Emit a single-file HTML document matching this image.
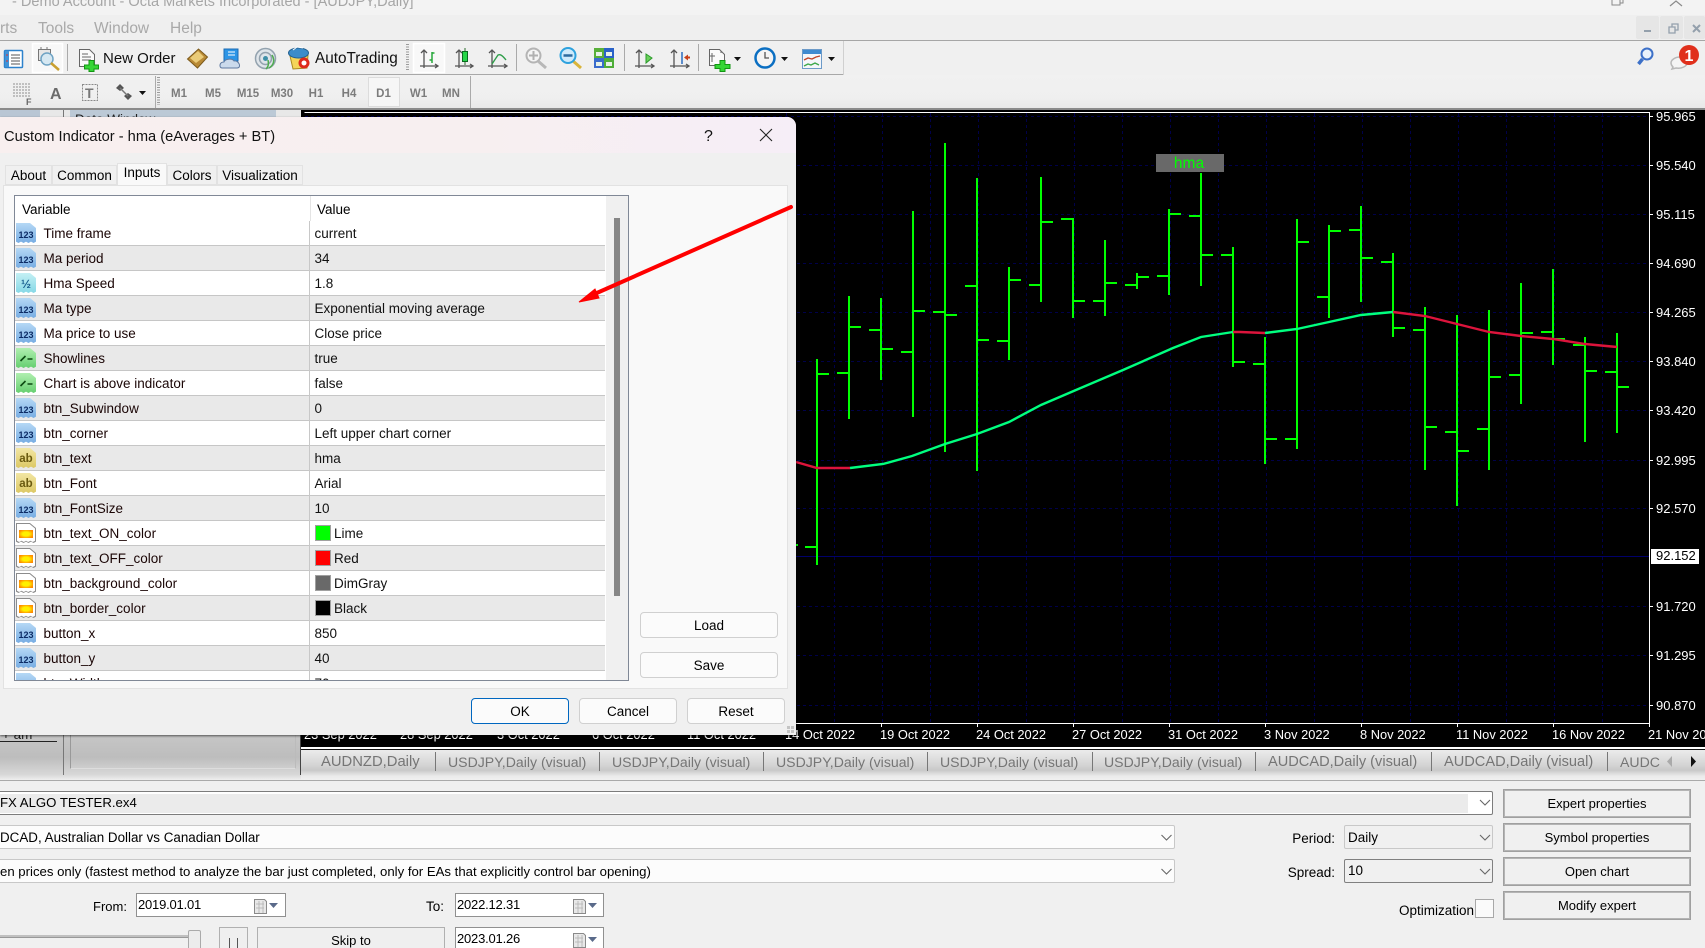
<!DOCTYPE html>
<html lang="en"><head><meta charset="utf-8"><title>Custom Indicator</title>
<style>
html,body{margin:0;padding:0;overflow:hidden;width:1705px;height:948px}
body{position:relative;background:#f0f0f0;font-family:"Liberation Sans",sans-serif;color:#000}
#root{position:absolute;left:0;top:0;width:1705px;height:948px;overflow:hidden}
.a{position:absolute}
.t{position:absolute;white-space:nowrap}
svg{position:absolute;left:0;top:0;overflow:visible}
.menu{font-size:15.5px;color:#a9a9a9;top:20px;line-height:18px}
.px{font-size:13px;color:#fff;left:1656px;line-height:16px}
.dt{font-size:12.85px;color:#fff;top:727px;line-height:16px}
.tab{position:absolute;top:165px;height:20px;line-height:21px;font-size:13.5px;text-align:center;background:#f0f0f0;box-shadow:inset 0 0 0 1px #e2e2e2;box-sizing:border-box}
.r{position:absolute;left:16px;width:590px;height:25px;box-sizing:border-box;border-bottom:1px solid #c6c6c6;background:#fff;font-size:13.5px;line-height:24px}
.r.g{background:#e9e9e9}
.r b{font-weight:normal;position:absolute;left:28.5px;top:1px;white-space:nowrap;color:#1a0505}
.r u{text-decoration:none;position:absolute;left:299.5px;top:1px;white-space:nowrap;color:#111}
.r s{text-decoration:none;position:absolute;left:294px;top:0;width:1px;height:25px;background:#c8c8c8}
.r em{position:absolute;left:299.5px;top:4px;width:16px;height:16px;box-sizing:border-box;border:1px solid #a0a0a0}
.r em+u{left:319px}
.ic{--t:polygon(0 0,70% 0,100% 25%,100% 93%,88% 100%,75% 93%,62% 100%,50% 93%,38% 100%,25% 93%,12% 100%,0 93%);position:absolute;left:1px;top:2px;width:20px;height:20px;clip-path:var(--t);font:bold 9px/24px "Liberation Sans",sans-serif;text-align:center;font-style:normal;box-sizing:border-box}
.n{background:linear-gradient(#b5d8f5,#77ade3);color:#0c2c66}
.h{background:linear-gradient(#c4f0f4,#86d8e6);color:#1a6090;font-size:12px;line-height:22px}
.y{background:linear-gradient(#f2e6a4,#dcc864);color:#6a5a10;font-size:11.5px;line-height:22px}
.b{background:linear-gradient(#b0efb0,#66cf70)}
.c{background:#8c8c8c}
.c::before{content:"";position:absolute;inset:1px;background:#fff;clip-path:var(--t)}
.c::after{content:"";position:absolute;left:3px;top:7px;width:14px;height:8px;background:radial-gradient(ellipse at center,#fff000 35%,#ff8a00 80%)}
.btn{position:absolute;box-sizing:border-box;text-align:center;font-size:13.5px;border-radius:4px;border:1px solid #d0d0d0;background:#fbfbfb;height:26px;line-height:26px}
.ts{position:absolute;top:750px;font-size:14.1px;color:#757575;line-height:24px;white-space:nowrap}
.sp{position:absolute;top:752px;width:1px;height:19px;background:#777}
.cb{position:absolute;box-sizing:border-box;font-size:13px;line-height:21px;white-space:nowrap;overflow:hidden}
.rb{position:absolute;left:1503px;width:188px;height:29px;box-sizing:border-box;border:1px solid #a0a0a0;box-shadow:inset 0 0 0 1px #b4b4b4;background:#f0f0f0;text-align:center;font-size:13px;line-height:28px}
.lb{position:absolute;font-size:13px;line-height:16px;white-space:nowrap}
</style></head><body><div id="root">

<!-- window chrome -->
<div class="a" style="left:0;top:0;width:1705px;height:15px;background:#f3f3f3"></div>
<div class="a" style="left:0;top:15px;width:1705px;height:25px;background:#efefef"></div>
<div class="t" style="left:12px;top:-7px;font-size:14.55px;line-height:18px;color:#a6a6a6">- Demo Account - Octa Markets Incorporated - [AUDJPY,Daily]</div>
<div class="t menu" style="left:0">rts</div><div class="t menu" style="left:38px">Tools</div><div class="t menu" style="left:94px">Window</div><div class="t menu" style="left:170px">Help</div>
<div class="a" style="left:0;top:40px;width:1705px;height:1px;background:#a6a6a6"></div>
<div class="a" style="left:0;top:41px;width:1705px;height:33px;background:#f0f0f0"></div>
<div class="a" style="left:0;top:74px;width:844px;height:1px;background:#a8a8a8"></div>
<div class="a" style="left:843px;top:41px;width:1px;height:34px;background:#d0d0d0"></div>
<div class="a" style="left:0;top:75px;width:1705px;height:33px;background:linear-gradient(#f1f1f1,#efefef 70%,#e8e8e8)"></div>
<div class="a" style="left:0;top:108px;width:1705px;height:2px;background:#8a8a8a"></div>
<div class="a" style="left:1636px;top:16px;width:23px;height:23px;background:#e6e6e6;border-radius:2px"></div>
<div class="a" style="left:1660px;top:16px;width:23px;height:23px;background:#e6e6e6;border-radius:2px"></div>
<div class="a" style="left:1684px;top:16px;width:21px;height:23px;background:#e6e6e6;border-radius:2px"></div>

<svg width="1705" height="110" viewBox="0 0 1705 110" fill="none">
 <!-- top right controls -->
 <path d="M1612 0v5h8v-5M1620 3h3v-3" stroke="#8a8a8a"/>
 <path d="M1670 6l6-5 6 5" stroke="#8a8a8a" stroke-width="1.2"/>
 <path d="M1644 31h7" stroke="#94a0ac" stroke-width="2"/>
 <path d="M1669 27h6v6h-6zM1672 27v-3h6v6h-3" stroke="#94a0ac" stroke-width="1.3"/>
 <path d="M1693 25l7 7M1700 25l-7 7" stroke="#94a0ac" stroke-width="2"/>
 <!-- market watch -->
 <rect x="4.500" y="50.500" width="18" height="17" rx="1" fill="#fff" stroke="#2d82cc" stroke-width="1.5"/>
 <rect x="5" y="51" width="4" height="16" fill="#3f93d8"/>
 <path d="M11 55h9M11 58h9M11 61h9M11 64h9" stroke="#555"/>
 <path d="M6 55h2M6 61h2" stroke="#d33"/>
 <!-- navigator pressed -->
 <rect x="32.500" y="43.500" width="30" height="29" fill="#f8f8f8" stroke="#fff" stroke-width="1.500"/>
 <rect x="38.500" y="49.500" width="12" height="11" fill="#e6e6e6" stroke="#777"/>
 <path d="M41 49v-2M47 49v-2" stroke="#777"/>
 <circle cx="47" cy="59" r="6" fill="#d6e8f2" stroke="#6fa3c4" stroke-width="1.5"/>
 <path d="M51 63l8 7" stroke="#c9a030" stroke-width="2.500"/>
 <path d="M67.500 44v27M516.500 44v27M624.500 44v27M698.500 44v27M155.500 76v32M470.500 76v32" stroke="#aaa"/>
 <!-- new order -->
 <path d="M79.500 49.500h10l5 5v12h-15z" fill="#fafafa" stroke="#666"/>
 <path d="M82 54h6M82 57h9M82 60h9" stroke="#666"/>
 <path d="M89 60.500h5v4.500h4.500v4h-4.500v2.500h-5v-2.500h-4.500v-4h4.500z" fill="#35d635" stroke="#129612"/>
 <!-- diamond -->
 <path d="M187.500 59l11-10 9 8-10 11z" fill="#b98a35" stroke="#7c5a1c"/>
 <path d="M190 58l8-7 6 6-8 6z" fill="#eacb78"/>
 <!-- cloud doc -->
 <rect x="224" y="49" width="14" height="12" fill="#2c95e6" stroke="#1c6cb4"/>
 <path d="M228 52h7M228 55h7" stroke="#fff"/>
 <path d="M222 68c-3 0-3-6 2-6 1-3 8-4 10-1 5-1 8 7 3 7z" fill="#cbdaec" stroke="#5f79a0"/>
 <!-- signal -->
 <circle cx="265.500" cy="58.500" r="10" fill="#dfe5ea" stroke="#93a2ae" stroke-width="1.500"/>
 <circle cx="265.500" cy="58.500" r="6" stroke="#93a2ae" stroke-width="1.500"/>
 <circle cx="265.500" cy="58.500" r="2.500" fill="#3f8fa8"/>
 <path d="M268 60c1 5 0 7-2 9M272 55c3 5 2 10-3 13" stroke="#4eab4e" stroke-width="1.500"/>
 <!-- autotrading -->
 <path d="M290 56l18-1-1 13-14 1z" fill="#f4d558" stroke="#a98a20"/>
 <ellipse cx="298.500" cy="53" rx="10" ry="5" fill="#3b8cc9" stroke="#23608f"/>
 <path d="M293 50l4-3 6 1" stroke="#fff"/>
 <circle cx="304" cy="63" r="5.500" fill="#de2a1a"/><circle cx="304" cy="63" r="2.500" fill="#fff"/>
 <!-- grip -->
 <path d="M407.500 44v27M158.500 77v28" stroke="#9a9a9a" stroke-width="3" stroke-dasharray="1 1.500"/>
 <!-- pressed bar chart -->
 <rect x="413.500" y="43.500" width="31" height="29" fill="#f8f8f8" stroke="#fff" stroke-width="1.500"/>
 <path d="M424 50v18M420 66h18M421 53l3-3 3 3M435 64l3 2-3 2" stroke="#555" stroke-width="1.300"/>
 <path d="M432 52v11M432 53h2.500M429.500 60h2.500" stroke="#27a83a" stroke-width="1.500"/>
 <!-- candle -->
 <path d="M459 50v18M455 66h18M456 53l3-3 3 3M470 64l3 2-3 2" stroke="#555" stroke-width="1.300"/>
 <path d="M465 48v17" stroke="#2b6b2b"/><rect x="462.500" y="51.500" width="5" height="10" fill="#25d648" stroke="#0a6a20"/>
 <!-- line -->
 <path d="M492 50v18M488 66h19M489 53l3-3 3 3M504 64l3 2-3 2" stroke="#555" stroke-width="1.300"/>
 <path d="M492 64l6-9c2-1 4 0 8 5" stroke="#2f9e4a" stroke-width="1.400"/>
 <!-- zoom in -->
 <path d="M538 61l8 7" stroke="#b8b8b8" stroke-width="3"/>
 <circle cx="533.500" cy="55.500" r="7" fill="#f4f4f4" stroke="#b4b4b4" stroke-width="2"/>
 <path d="M529 55.500h9M533.500 51v9" stroke="#b0b0b0" stroke-width="2"/>
 <!-- zoom out -->
 <path d="M573 61l8 7" stroke="#d9b43a" stroke-width="3"/>
 <circle cx="568" cy="55.500" r="7.500" fill="#cfeafb" stroke="#2ea2de" stroke-width="2"/>
 <path d="M563.500 55.500h9" stroke="#2c6a9e" stroke-width="2.500"/>
 <!-- tile -->
 <rect x="594" y="48" width="10" height="10" fill="#59b03a"/><rect x="604" y="48" width="10" height="10" fill="#2a62c8"/>
 <rect x="594" y="58" width="10" height="10" fill="#3a6ccc"/><rect x="604" y="58" width="10" height="10" fill="#4fae38"/>
 <path d="M596 52h6v4h-6zM606 52h6v4h-6zM596 62h6v4h-6zM606 62h6v4h-6z" fill="#e8f2e8"/>
 <!-- shift -->
 <path d="M639 50v18M635 66h19M636 53l3-3 3 3M651 64l3 2-3 2" stroke="#555" stroke-width="1.300"/>
 <path d="M646 54l6 4-6 5z" fill="#6ad05a" stroke="#2a9a2a"/>
 <!-- autoscroll -->
 <path d="M674 50v18M670 66h19M671 53l3-3 3 3M686 64l3 2-3 2" stroke="#555" stroke-width="1.300"/>
 <path d="M682 52v12" stroke="#2a6cc0" stroke-width="1.500"/>
 <path d="M684 57.500l4-3v2h2v2h-2v2z" fill="#c8401a"/>
 <!-- new chart -->
 <path d="M709.500 49.500h10l5 5v11h-15z" fill="#fafafa" stroke="#666"/>
 <path d="M712 53v9M715 56h-5M721 53v-2" stroke="#666"/>
 <path d="M720 60.500h5v4h5v4h-5v3h-5v-3h-5v-4h5z" fill="#35d635" stroke="#129612"/>
 <path d="M734 57h7l-3.500 4z M781 57h7l-3.500 4z M828 57h7l-3.500 4z" fill="#111"/>
 <!-- clock -->
 <circle cx="765" cy="58" r="9.500" fill="#f4f4f4" stroke="#0b6fc2" stroke-width="2.500"/>
 <path d="M765 52v6h4" stroke="#555" stroke-width="1.300"/>
 <!-- template -->
 <rect x="802.500" y="49.500" width="19" height="19" fill="#f4f6fa" stroke="#6c9ac8"/>
 <rect x="803" y="50" width="18" height="4" fill="#3f8ad0"/>
 <path d="M804 60l4-2 4 1 4-2 4-1" stroke="#c0452a" stroke-width="1.300"/>
 <path d="M804 66l4-2 3 1 4-2 4 2" stroke="#3da84a" stroke-width="1.300"/>
 <!-- search + chat -->
 <circle cx="1647" cy="54" r="5.500" fill="#eaf2fb" stroke="#3c70c8" stroke-width="2"/>
 <path d="M1642.500 59l-4 5" stroke="#3c70c8" stroke-width="3.500"/>
 <path d="M1680 57c-5 0-9 3-9 6 0 2 1 3 2 4l-1 2 4-1c6 1 11-2 11-5 0-4-3-6-7-6z" fill="#f4f4f4" stroke="#b8b8b8" stroke-width="1.500"/>
 <circle cx="1689" cy="55" r="10" fill="#e0301c"/>
 <text x="1689" y="61" font-family="Liberation Sans" font-size="16" font-weight="bold" text-anchor="middle" fill="#fff">1</text>
 <!-- row 2 icons -->
 <path d="M13 84h17M13 87h17M13 90h17M13 93h17M13 96h17" stroke="#8f8f8f" stroke-dasharray="2 1"/>
 <text x="26" y="105" font-family="Liberation Sans" font-size="9" font-weight="bold" fill="#666">F</text>
 <text x="50" y="99" font-family="Liberation Sans" font-size="16" font-weight="bold" fill="#6b6b6b">A</text>
 <rect x="82.500" y="84.500" width="15" height="16" stroke="#8a8a8a" stroke-dasharray="2 1"/>
 <text x="85" y="98" font-family="Liberation Sans" font-size="14" font-weight="bold" fill="#777">T</text>
 <path d="M116 88l4-4 4 4-4 3zM124 96l4-3 4 3-4 4z" fill="#555"/><path d="M120 88l8 8" stroke="#777" stroke-width="1.500"/>
 <path d="M139 91h7l-3.500 4z" fill="#111"/>
 <rect x="368.500" y="77.500" width="31" height="29" fill="#f6f6f6" stroke="#dcdcdc"/>
 <g font-family="Liberation Sans" font-size="11.500" font-weight="bold" fill="#7c7c7c" text-anchor="middle">
  <text x="179" y="97">M1</text><text x="213" y="97">M5</text><text x="248" y="97">M15</text><text x="282" y="97">M30</text><text x="316" y="97">H1</text><text x="349" y="97">H4</text><text x="383.500" y="97">D1</text><text x="418.500" y="97">W1</text><text x="451" y="97">MN</text>
 </g>
</svg>
<div class="t" style="left:103px;top:50px;font-size:15px;line-height:18px;color:#111">New Order</div>
<div class="t" style="left:315px;top:50px;font-size:15.3px;line-height:18px;color:#111">AutoTrading</div>

<!-- left panes peek -->
<div class="a" style="left:0;top:110px;width:301px;height:10px;background:#e8e8e8"></div>
<div class="a" style="left:0;top:110px;width:40px;height:10px;background:#b9c6d4"></div>
<div class="a" style="left:70px;top:110px;width:206px;height:10px;background:#bcc9d6"></div>
<div class="a" style="left:63px;top:110px;width:1px;height:10px;background:#777"></div>
<div class="t" style="left:75px;top:112px;font-size:13.5px;line-height:16px;color:#222">Data Window</div>
<div class="a" style="left:0;top:735px;width:301px;height:45px;background:linear-gradient(#c6c6c6,#bdbdbd 50%,#d8d8d8 88%,#efefef)"></div>
<div class="t" style="left:2px;top:727px;font-size:13.5px;line-height:16px;color:#222">+ am</div>
<div class="a" style="left:0;top:741px;width:57px;height:1px;background:#222"></div>
<div class="a" style="left:63px;top:735px;width:1px;height:40px;background:#777"></div>
<div class="a" style="left:70px;top:735px;width:226px;height:34px;box-sizing:border-box;border-left:1px solid #999;border-right:1px solid #bbb;border-bottom:1px solid #ddd"></div>

<!-- chart -->
<div class="a" style="left:301px;top:110px;width:1404px;height:637px;background:#000"></div>
<svg width="1705" height="948" viewBox="0 0 1705 948" fill="none" shape-rendering="crispEdges">
 <path d="M305 116.500H1649M305 165.500H1649M305 214.500H1649M305 263.500H1649M305 312.500H1649M305 361.500H1649M305 410.500H1649M305 460.500H1649M305 508.500H1649M305 606.500H1649M305 655.500H1649M305 705.500H1649" stroke="#00004a" stroke-dasharray="3 3"/>
 <path d="M786.500 113V723M834.500 113V723M882.500 113V723M930.500 113V723M978.500 113V723M1026.500 113V723M1074.500 113V723M1122.500 113V723M1170.500 113V723M1218.500 113V723M1266.500 113V723M1314.500 113V723M1362.500 113V723M1410.500 113V723M1458.500 113V723M1506.500 113V723M1554.500 113V723M1602.500 113V723" stroke="#00004a" stroke-dasharray="3 3"/>
 <path d="M305 556.500H1649" stroke="#00006a"/>
 <path d="M304.500 112.500H1649.500V723.500H304.500" stroke="#fff"/>
 <path d="M1650 116.500h3M1650 165.500h3M1650 214.500h3M1650 263.500h3M1650 312.500h3M1650 361.500h3M1650 410.500h3M1650 460.500h3M1650 508.500h3M1650 606.500h3M1650 655.500h3M1650 705.500h3M785.500 724v3M881.500 724v3M977.500 724v3M1073.500 724v3M1169.500 724v3M1265.500 724v3M1361.500 724v3M1457.500 724v3M1553.500 724v3M1649.500 724v3" stroke="#fff"/>
 <path stroke="#00ff00" stroke-width="2" d="M785 545H798M817 359V565M805 547H817M817 374H829M849 296V419M837 373H849M849 327H861M881 298V380M869 330H881M881 349H893M913 211V417M901 352H913M913 311H925M945 143V452M933 312H945M945 315H957M977 178V471M965 286H977M977 340H989M1009 267V360M997 341H1009M1009 280H1021M1041 177V302M1029 285H1041M1041 222H1053M1073 218V318M1061 219H1073M1073 301H1085M1105 240V316M1093 301H1105M1105 283H1117M1137 273V289M1125 285H1137M1137 277H1149M1169 209V295M1157 276H1169M1169 214H1181M1201 173V286M1189 216H1201M1201 255H1213M1233 247V367M1221 255H1233M1233 362H1245M1265 337V464M1253 364H1265M1265 439H1277M1297 219V449M1285 439H1297M1297 242H1309M1329 225V318M1317 297H1329M1329 231H1341M1361 206V302M1349 230H1361M1361 258H1373M1393 253V337M1381 262H1393M1393 328H1405M1425 307V470M1413 330H1425M1425 427H1437M1457 315V506M1445 432H1457M1457 451H1469M1489 310V470M1477 429H1489M1489 377H1501M1521 283V404M1509 375H1521M1521 333H1533M1553 269V365M1541 332H1553M1553 339H1565M1585 337V442M1573 345H1585M1585 371H1597M1617 333V433M1605 372H1617M1617 387H1629"/>
 <path stroke="#dc143c" stroke-width="2.400" shape-rendering="auto" d="M796 462L817 468H850M1233 332L1240 332L1265 333M1393 312L1425 316L1457 324L1489 332L1521 336L1553 339L1585 344L1617 347"/>
 <path stroke="#00ff7f" stroke-width="2.400" shape-rendering="auto" d="M850 468L883 464L912 456L945 444L977 434L1009 422L1041 405L1076 390L1123 370L1173 348L1201 337L1233 332M1265 333L1297 329L1329 322L1361 315L1393 312"/>
 <rect x="1156" y="154" width="68" height="18" fill="#696969"/>
</svg>
<div class="t" style="left:1155px;top:155px;width:68px;text-align:center;font-size:15.5px;line-height:18px;color:#00ff00">hma</div>
<div class="t px" style="top:109px">95.965</div><div class="t px" style="top:158px">95.540</div><div class="t px" style="top:207px">95.115</div><div class="t px" style="top:256px">94.690</div><div class="t px" style="top:305px">94.265</div><div class="t px" style="top:354px">93.840</div><div class="t px" style="top:403px">93.420</div><div class="t px" style="top:453px">92.995</div><div class="t px" style="top:501px">92.570</div>
<div class="a" style="left:1651px;top:549px;width:48px;height:15px;background:#fff"></div>
<div class="t px" style="top:548px;color:#000">92.152</div>
<div class="t px" style="top:599px">91.720</div><div class="t px" style="top:648px">91.295</div><div class="t px" style="top:698px">90.870</div>
<div class="t dt" style="left:304px">23 Sep 2022</div><div class="t dt" style="left:400px">28 Sep 2022</div><div class="t dt" style="left:497px">3 Oct 2022</div><div class="t dt" style="left:592px">6 Oct 2022</div><div class="t dt" style="left:687px">11 Oct 2022</div>
<div class="t dt" style="left:785px">14 Oct 2022</div><div class="t dt" style="left:880px">19 Oct 2022</div><div class="t dt" style="left:976px">24 Oct 2022</div><div class="t dt" style="left:1072px">27 Oct 2022</div><div class="t dt" style="left:1168px">31 Oct 2022</div><div class="t dt" style="left:1264px">3 Nov 2022</div><div class="t dt" style="left:1360px">8 Nov 2022</div><div class="t dt" style="left:1456px">11 Nov 2022</div><div class="t dt" style="left:1552px">16 Nov 2022</div><div class="t dt" style="left:1648px">21 Nov 2022</div>

<!-- tab bar -->
<div class="a" style="left:301px;top:747px;width:1404px;height:33px;background:linear-gradient(#f0f0f0,#d4d4d4 55%,#c8c8c8 70%,#eaeaea 88%,#f0f0f0);overflow:hidden"></div>
<div class="a" style="left:301px;top:747px;width:1404px;height:2px;background:#fff"></div>
<div class="a" style="left:301px;top:749px;width:1404px;height:1px;background:#111"></div>
<div class="a" style="left:300px;top:735px;width:1px;height:40px;background:#444"></div>
<div class="ts" style="left:321px;font-size:14.8px">AUDNZD,Daily</div><div class="sp" style="left:435px"></div>
<div class="ts" style="left:448px">USDJPY,Daily (visual)</div><div class="sp" style="left:599px"></div>
<div class="ts" style="left:612px">USDJPY,Daily (visual)</div><div class="sp" style="left:763px"></div>
<div class="ts" style="left:776px">USDJPY,Daily (visual)</div><div class="sp" style="left:927px"></div>
<div class="ts" style="left:940px">USDJPY,Daily (visual)</div><div class="sp" style="left:1092px"></div>
<div class="ts" style="left:1104px">USDJPY,Daily (visual)</div><div class="sp" style="left:1255px"></div>
<div class="ts" style="left:1268px;font-size:14.6px">AUDCAD,Daily (visual)</div><div class="sp" style="left:1431px"></div>
<div class="ts" style="left:1444px;font-size:14.6px">AUDCAD,Daily (visual)</div><div class="sp" style="left:1607px"></div>
<div class="ts" style="left:1620px">AUDC</div>
<svg width="1705" height="948" viewBox="0 0 1705 948"><path d="M1672 756v11l-5-5.500z" fill="#aaa"/><path d="M1691 756v11l5-5.500z" fill="#111"/></svg>

<!-- bottom panel -->
<div class="a" style="left:0;top:780px;width:1705px;height:168px;background:#f0f0f0"></div>
<div class="a" style="left:0;top:780px;width:1705px;height:1px;background:#aaa"></div>
<div class="cb" style="left:-2px;top:791px;width:1495px;height:24px;border:1px solid #7c7c7c;border-left:none;border-radius:2px;background:#fff;padding:1px 0 0 2px"><span class="a" style="left:0;top:2px;width:1470px;height:19px;background:#ebebeb"></span><span class="a" style="left:2px;top:0;line-height:22px;font-size:13.2px">FX ALGO TESTER.ex4</span></div>
<div class="cb" style="left:-2px;top:825px;width:1177px;height:24px;border:1px solid #c8c8c8;border-left:none;border-radius:2px;background:#fcfcfc;padding:1px 0 0 2px;font-size:13.4px">DCAD, Australian Dollar vs Canadian Dollar</div>
<div class="cb" style="left:-2px;top:859px;width:1177px;height:24px;border:1px solid #c8c8c8;border-left:none;border-radius:2px;background:#fcfcfc;padding:1px 0 0 2px;font-size:13.18px">en prices only (fastest method to analyze the bar just completed, only for EAs that explicitly control bar opening)</div>
<div class="lb" style="left:93px;top:899px">From:</div>
<div class="cb" style="left:136px;top:893px;width:150px;height:24px;border:1px solid #909090;background:#fff;padding-left:1px;line-height:22px;letter-spacing:-.2px">2019.01.01</div>
<div class="lb" style="left:426px;top:899px;font-size:13.5px">To:</div>
<div class="cb" style="left:455px;top:893px;width:149px;height:24px;border:1px solid #909090;background:#fff;padding-left:1px;line-height:22px;letter-spacing:-.2px">2022.12.31</div>
<div class="cb" style="left:455px;top:927px;width:149px;height:30px;border:1px solid #909090;background:#fff;padding-left:1px;line-height:22px;letter-spacing:-.2px">2023.01.26</div>
<div class="a" style="left:0;top:935px;width:190px;height:2px;background:#c0c0c0;border-bottom:1px solid #999"></div>
<div class="a" style="left:188px;top:930px;width:13px;height:30px;box-sizing:border-box;border:1px solid #aaa;background:#ececec;border-radius:2px"></div>
<div class="cb" style="left:219px;top:927px;width:29px;height:30px;border:1px solid #b0b0b0;background:#efefef"></div>
<div class="cb" style="left:257px;top:927px;width:188px;height:30px;border:1px solid #b0b0b0;background:#efefef;text-align:center;line-height:25px">Skip to</div>
<svg width="1705" height="948" viewBox="0 0 1705 948" fill="none">
 <path d="M229.500 938v12M237.500 938v12" stroke="#555"/>
 <path d="M254.500 899.500h10l2 2v12h-12z M573.500 899.500h10l2 2v12h-12z M573.500 933.500h10l2 2v12h-12z" fill="#e8e8e8" stroke="#8a8a8a"/>
 <path d="M256 904h8M256 908h8M259 901v12M263 901v12M575 904h8M575 908h8M578 901v12M582 901v12M575 938h8M575 942h8M578 935v12M582 935v12" stroke="#bbb"/>
 <path d="M269 903h9l-4.500 5zM588 903h9l-4.500 5zM588 937h9l-4.500 5z" fill="#5a6a8a"/>
 <path d="M1480 800l5 5 5-5M1161.500 835l5 5 5-5M1161.500 869l5 5 5-5M1480 835l5 5 5-5M1480 869l5 5 5-5" stroke="#666" stroke-width="1.100"/>
</svg>
<div class="lb" style="left:1292px;top:831px;width:43px;text-align:right;font-size:13.5px">Period:</div>
<div class="cb" style="left:1344px;top:825px;width:149px;height:24px;border:1px solid #c8c8c8;border-radius:2px;background:transparent;padding-left:3px;font-size:13.5px;line-height:23px">Daily</div>
<div class="lb" style="left:1277px;top:865px;width:58px;text-align:right;font-size:13.5px">Spread:</div>
<div class="cb" style="left:1344px;top:859px;width:149px;height:24px;border:1px solid #808080;border-radius:2px;background:transparent;padding-left:3px;font-size:13.5px;line-height:22px">10</div>
<div class="lb" style="left:1399px;top:903px;font-size:13.5px">Optimization</div>
<div class="a" style="left:1475px;top:899px;width:19px;height:19px;box-sizing:border-box;border:1px solid #a8a8a8;background:#fafafa"></div>
<div class="rb" style="top:789px">Expert properties</div>
<div class="rb" style="top:823px">Symbol properties</div>
<div class="rb" style="top:857px">Open chart</div>
<div class="rb" style="top:891px">Modify expert</div>

<!-- dialog -->
<div class="a" style="left:0;top:117px;width:796px;height:618px;background:#f0f0f0;border-radius:0 9px 0 0;box-shadow:0 1px 2px rgba(0,0,0,.6);overflow:hidden">
 <div class="a" style="left:0;top:0;width:796px;height:36px;background:linear-gradient(90deg,#f8efef,#f7eff0 60%,#f6eef7)"></div>
</div>
<div class="t" style="left:4px;top:128px;font-size:14.65px;line-height:18px;color:#111">Custom Indicator - hma (eAverages + BT)</div>
<div class="t" style="left:704px;top:128px;font-size:16px;line-height:18px;color:#111">?</div>
<svg width="1705" height="948" viewBox="0 0 1705 948" fill="none"><path d="M760 129l12 12M772 129l-12 12" stroke="#222" stroke-width="1.100"/></svg>
<div class="a" style="left:3px;top:185px;width:785px;height:504px;box-sizing:border-box;background:#f9f9f9;border:1px solid #e2e2e2"></div>
<div class="tab" style="left:5px;width:47px">About</div>
<div class="tab" style="left:52px;width:65px">Common</div>
<div class="tab" style="left:117px;top:163px;width:50px;height:23px;background:#f9f9f9;line-height:20px;clip-path:inset(0 0 1px 0)">Inputs</div>
<div class="tab" style="left:167px;width:50px">Colors</div>
<div class="tab" style="left:217px;width:86px">Visualization</div>

<!-- table -->
<div class="a" style="left:14px;top:195px;width:615px;height:486px;box-sizing:border-box;border:1px solid #808896;border-width:1px;background:#fff;overflow:hidden"></div>
<div class="a" style="left:15px;top:196px;width:613px;height:484px;overflow:hidden">
 <div class="a" style="left:0;top:0;width:591px;height:25px;background:#fff;font-size:13.5px;line-height:26px"><span class="t" style="left:7px;top:1px">Variable</span><span class="t" style="left:302px;top:1px">Value</span><span class="a" style="left:295px;top:0;width:1px;height:25px;background:#e4e4e4"></span></div>
 <div class="a" style="left:591px;top:0;width:22px;height:484px;background:#f0f0f0"></div>
 <div class="a" style="left:599px;top:22px;width:6px;height:378px;background:#868686"></div>
 <div style="position:absolute;left:-16px;top:-196px">
 <div class="r" style="top:221px"><i class="ic n">123</i><b>Time frame</b><s></s><u>current</u></div>
 <div class="r g" style="top:246px"><i class="ic n">123</i><b>Ma period</b><s></s><u>34</u></div>
 <div class="r" style="top:271px"><i class="ic h">½</i><b>Hma Speed</b><s></s><u>1.8</u></div>
 <div class="r g" style="top:296px"><i class="ic n">123</i><b>Ma type</b><s></s><u>Exponential moving average</u></div>
 <div class="r" style="top:321px"><i class="ic n">123</i><b>Ma price to use</b><s></s><u>Close price</u></div>
 <div class="r g" style="top:346px"><i class="ic b"><svg width="20" height="20" viewBox="0 0 19 20" fill="none"><path d="M4 13l5-5M11 11h5" stroke="#0c4a12" stroke-width="1.600"/></svg></i><b>Showlines</b><s></s><u>true</u></div>
 <div class="r" style="top:371px"><i class="ic b"><svg width="20" height="20" viewBox="0 0 19 20" fill="none"><path d="M4 13l5-5M11 11h5" stroke="#0c4a12" stroke-width="1.600"/></svg></i><b>Chart is above indicator</b><s></s><u>false</u></div>
 <div class="r g" style="top:396px"><i class="ic n">123</i><b>btn_Subwindow</b><s></s><u>0</u></div>
 <div class="r" style="top:421px"><i class="ic n">123</i><b>btn_corner</b><s></s><u>Left upper chart corner</u></div>
 <div class="r g" style="top:446px"><i class="ic y">ab</i><b>btn_text</b><s></s><u>hma</u></div>
 <div class="r" style="top:471px"><i class="ic y">ab</i><b>btn_Font</b><s></s><u>Arial</u></div>
 <div class="r g" style="top:496px"><i class="ic n">123</i><b>btn_FontSize</b><s></s><u>10</u></div>
 <div class="r" style="top:521px"><i class="ic c"></i><b>btn_text_ON_color</b><s></s><em style="background:#00ff00"></em><u>Lime</u></div>
 <div class="r g" style="top:546px"><i class="ic c"></i><b>btn_text_OFF_color</b><s></s><em style="background:#ff0000"></em><u>Red</u></div>
 <div class="r" style="top:571px"><i class="ic c"></i><b>btn_background_color</b><s></s><em style="background:#696969"></em><u>DimGray</u></div>
 <div class="r g" style="top:596px"><i class="ic c"></i><b>btn_border_color</b><s></s><em style="background:#000"></em><u>Black</u></div>
 <div class="r" style="top:621px"><i class="ic n">123</i><b>button_x</b><s></s><u>850</u></div>
 <div class="r g" style="top:646px"><i class="ic n">123</i><b>button_y</b><s></s><u>40</u></div>
 <div class="r" style="top:671px"><i class="ic n">123</i><b>btn_Width</b><s></s><u>70</u></div>
 </div>
</div>

<div class="btn" style="left:640px;top:612px;width:138px">Load</div>
<div class="btn" style="left:640px;top:652px;width:138px">Save</div>
<div class="btn" style="left:471px;top:698px;width:98px;border:1.500px solid #0067c0;line-height:25px">OK</div>
<div class="btn" style="left:579px;top:698px;width:98px">Cancel</div>
<div class="btn" style="left:687px;top:698px;width:98px">Reset</div>
<svg width="1705" height="948" viewBox="0 0 1705 948" fill="none">
 <path d="M787 726h3v3h-3zM791 726h3v3h-3zM787 730h3v3h-3zM791 730h3v3h-3z" fill="#c4c4c4"/>
 <path d="M791 207L590 296" stroke="#ff0000" stroke-width="4" stroke-linecap="round"/>
 <path d="M579 302L595 289L599 298Z" fill="#ff0000" stroke="#ff0000"/>
</svg>
</div></body></html>
